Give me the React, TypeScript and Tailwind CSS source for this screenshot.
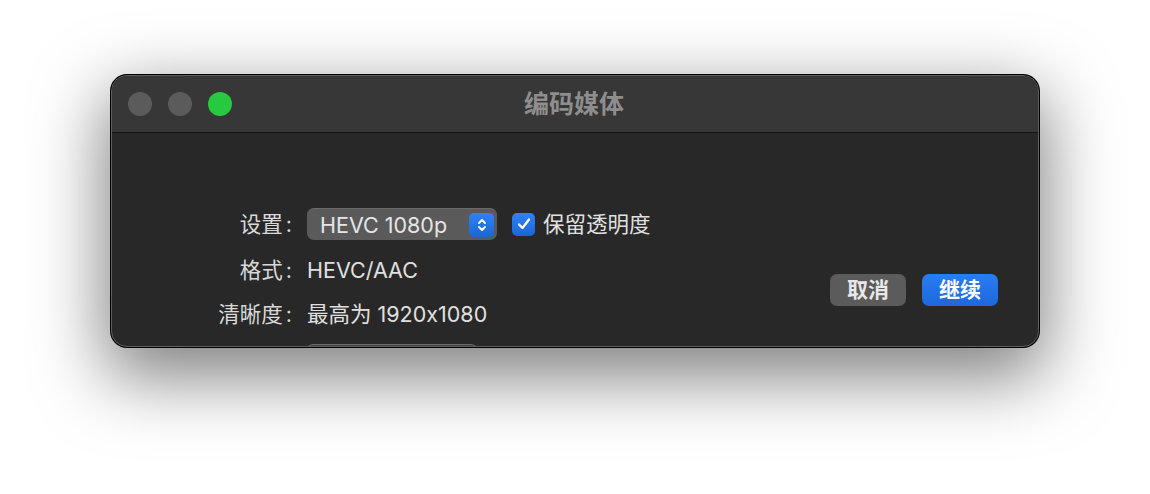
import React from "react";

const font = { fontFamily: '"Inter", "Noto Sans CJK SC", sans-serif' };

const Stepper = () => (
  <div className="w-[25px] h-[24px] rounded-[5px] bg-gradient-to-b from-[#2f83f5] to-[#1b66d6] flex items-center justify-center">
    <svg width="12" height="16" viewBox="0 0 12 16" fill="none">
      <path d="M3 6 L6 3 L9 6" stroke="white" strokeWidth="1.8" strokeLinecap="round" strokeLinejoin="round" />
      <path d="M3 10 L6 13 L9 10" stroke="white" strokeWidth="1.8" strokeLinecap="round" strokeLinejoin="round" />
    </svg>
  </div>
);

const Checkbox = () => (
  <div className="w-[23px] h-[23px] rounded-[5px] bg-gradient-to-b from-[#2f83f5] to-[#1b66d6] flex items-center justify-center">
    <svg width="16" height="16" viewBox="0 0 16 16" fill="none">
      <path d="M3 8.5 L6.5 12 L13 3.5" stroke="white" strokeWidth="2.4" strokeLinecap="round" strokeLinejoin="round" />
    </svg>
  </div>
);

const Label = ({ text }: { text: string }) => (
  <div className="text-right h-7 leading-7 text-[#d9d9d9]">
    {text}
    <span className="ml-[3px]">:</span>
  </div>
);

export default function App() {
  return (
    <div className="w-[1150px] h-[494px] bg-white pt-[75px] pl-[111px]" style={font}>
      <div className="w-[928px] h-[272px] rounded-[16px] overflow-hidden border border-[#5e5e5e] ring-1 ring-black shadow-[0_24px_70px_6px_rgba(0,0,0,0.5)] bg-[#282828] flex flex-col">
        {/* title bar */}
        <div className="h-[57px] shrink-0 bg-[#373737] border-b border-[#141414] grid grid-cols-[1fr_auto_1fr] items-center">
          <div className="flex gap-4 pl-4">
            <div className="w-6 h-6 rounded-full bg-[#5b5b5b]" />
            <div className="w-6 h-6 rounded-full bg-[#5b5b5b]" />
            <div className="w-6 h-6 rounded-full bg-[#28c840]" />
          </div>
          <div className="text-[25px] font-bold text-[#8e8e8e] leading-none -ml-[2px]">编码媒体</div>
          <div />
        </div>

        {/* content */}
        <div className="flex flex-1 pt-[75px] text-[21.5px] text-[#e0e0e0]">
          <div className="grid grid-cols-[180px_auto] gap-x-[15px] gap-y-4 items-center content-start">
            <Label text="设置" />
            <div className="flex items-center">
              <div className="w-[190px] h-[32px] rounded-[7px] bg-[#5a5a5a] border-t border-[#6a6a6a] flex items-center justify-between pl-[13px] pr-[3px]">
                <span className="text-[#e6e6e6]">HEVC 1080p</span>
                <Stepper />
              </div>
              <div className="ml-[15px]">
                <Checkbox />
              </div>
              <span className="ml-2">保留透明度</span>
            </div>

            <Label text="格式" />
            <div className="h-7 leading-7">HEVC/AAC</div>

            <Label text="清晰度" />
            <div className="h-7 leading-7">最高为 1920x1080</div>

            <div />
            <div className="w-[170px] h-8 rounded-md bg-[#3c3c3c] border-t border-[#6c6c6c]" />
          </div>

          <div className="ml-auto mr-[40px] mt-[66px] flex gap-4 self-start">
            <button className="w-[76px] h-[32px] rounded-[7px] bg-[#5b5b5b] text-[#e8e8e8] text-[21px] font-semibold">取消</button>
            <button className="w-[76px] h-[32px] rounded-[7px] bg-gradient-to-b from-[#2a7df2] to-[#1c68dc] text-white text-[21px] font-semibold">继续</button>
          </div>
        </div>
      </div>
    </div>
  );
}
